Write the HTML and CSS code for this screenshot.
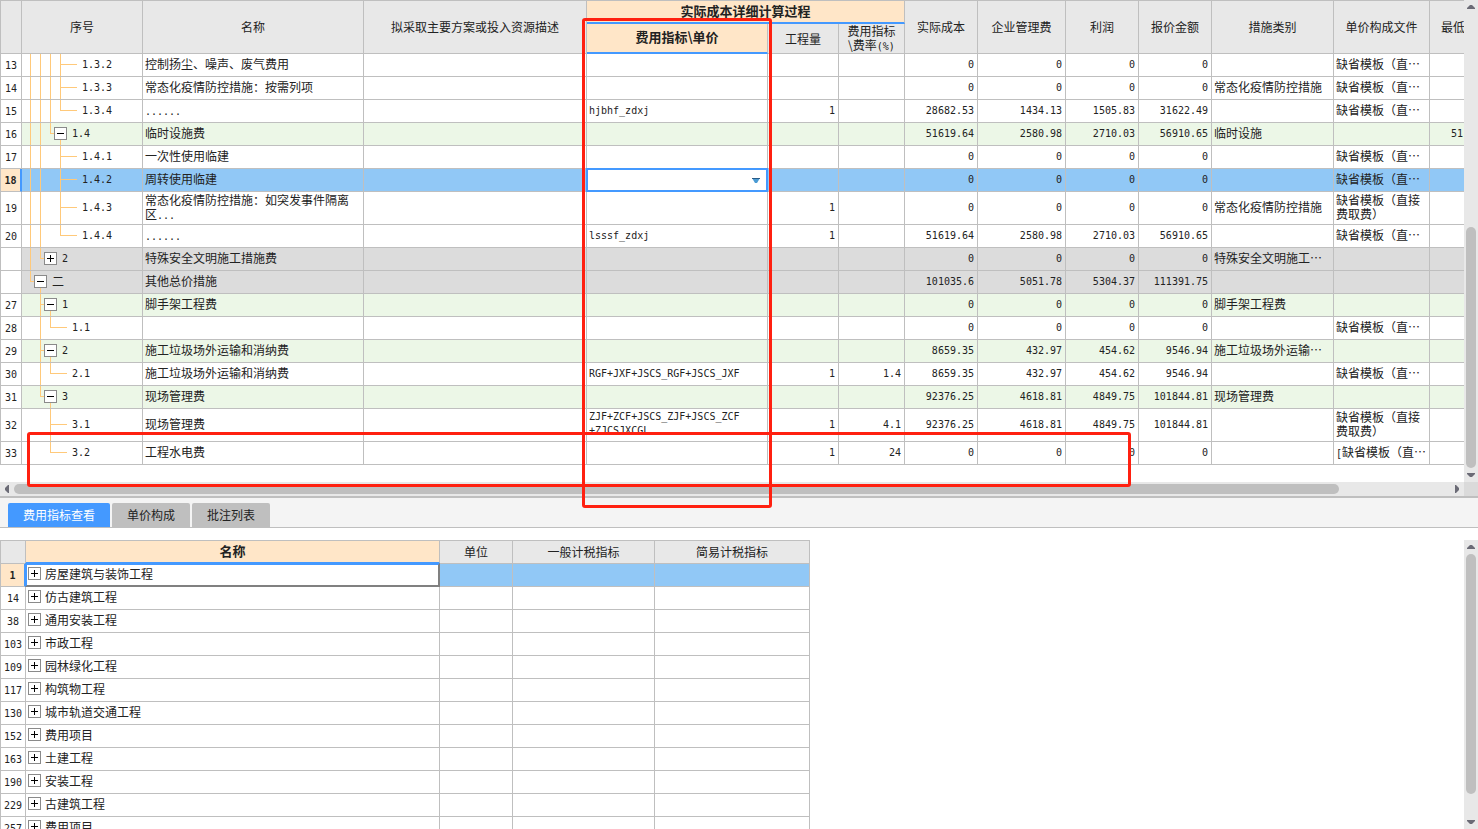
FILE: index.html
```html
<!DOCTYPE html>
<html lang="zh-CN">
<head>
<meta charset="utf-8">
<title>措施项目费用</title>
<link rel="stylesheet" href="styles.css">
</head>
<body>
<svg class="defs" aria-hidden="true">
  <symbol id="plus" viewBox="0 0 11 11"><path d="M2 5h7v1H2zM5 2h1v7H5z"/></symbol>
  <symbol id="minus" viewBox="0 0 11 11"><path d="M2 5h7v1H2z"/></symbol>
  <symbol id="up" viewBox="0 0 14 14"><path d="M3 9V8L6 5h2l3 3v1z"/></symbol>
  <symbol id="down" viewBox="0 0 14 14"><path d="M3 5v1l3 3h2l3-3V5z"/></symbol>
  <symbol id="left" viewBox="0 0 14 14"><path d="M9 3H8L5 6v2l3 3h1z"/></symbol>
  <symbol id="right" viewBox="0 0 14 14"><path d="M5 3h1l3 3v2l-3 3H5z"/></symbol>
</svg>

<main class="app">
<section class="upper">
  <div class="sheet">
  <table class="grid costs">
    <colgroup><col class="c-no"><col class="c-tree"><col class="c-name"><col class="c-plan"><col class="c-price"><col class="c-qty"><col class="c-rate"><col class="c-sum"><col class="c-mgmt"><col class="c-sum"><col class="c-sum"><col class="c-kind"><col class="c-file"><col></colgroup>
    <thead>
      <tr class="group">
        <th rowspan="2"></th><th rowspan="2">序号</th><th rowspan="2">名称</th><th rowspan="2">拟采取主要方案或投入资源描述</th>
        <th colspan="3" class="hot">实际成本详细计算过程</th>
        <th rowspan="2">实际成本</th><th rowspan="2">企业管理费</th><th rowspan="2">利润</th><th rowspan="2">报价金额</th><th rowspan="2">措施类别</th><th rowspan="2">单价构成文件</th><th rowspan="2" class="cut">最低</th>
      </tr>
      <tr class="sub">
        <th class="hot">费用指标\单价</th><th>工程量</th><th>费用指标<br>\费率<span class="m">(%)</span></th>
      </tr>
    </thead>
    <tbody>
      <tr><td class="no">13<td><div class="tree"><i class="v"></i><i class="v"></i><i class="v"></i><i class="t"></i><span>1.3.2</span></div><td>控制扬尘、噪声、废气费用<td><td><td><td><td class="n">0<td class="n">0<td class="n">0<td class="n">0<td><td>缺省模板（直…<td></tr>
      <tr><td class="no">14<td><div class="tree"><i class="v"></i><i class="v"></i><i class="v"></i><i class="t"></i><span>1.3.3</span></div><td>常态化疫情防控措施：按需列项<td><td><td><td><td class="n">0<td class="n">0<td class="n">0<td class="n">0<td>常态化疫情防控措施<td>缺省模板（直…<td></tr>
      <tr><td class="no">15<td><div class="tree"><i class="v"></i><i class="v"></i><i class="v"></i><i class="e"></i><span>1.3.4</span></div><td><span class="m">......</span><td><td class="f">hjbhf_zdxj<td class="n">1<td><td class="n">28682.53<td class="n">1434.13<td class="n">1505.83<td class="n">31622.49<td><td>缺省模板（直…<td></tr>
      <tr class="green"><td class="no">16<td><div class="tree"><i class="v"></i><i class="v"></i><i class="e s"></i><b><button aria-label="收起 1.4"><svg><use href="#minus"/></svg></button></b><span>1.4</span></div><td>临时设施费<td><td><td><td><td class="n">51619.64<td class="n">2580.98<td class="n">2710.03<td class="n">56910.65<td>临时设施<td><td class="n">51</tr>
      <tr><td class="no">17<td><div class="tree"><i class="v"></i><i class="v"></i><i></i><i class="t"></i><span>1.4.1</span></div><td>一次性使用临建<td><td><td><td><td class="n">0<td class="n">0<td class="n">0<td class="n">0<td><td>缺省模板（直…<td></tr>
      <tr class="sel"><td class="no">18<td><div class="tree"><i class="v"></i><i class="v"></i><i></i><i class="t"></i><span>1.4.2</span></div><td>周转使用临建<td><td class="editing"><div class="combo"><select aria-label="费用指标\单价"><option></option></select><svg viewBox="0 0 8 5"><path fill="#4a9bd4" d="M0 0h8L5 5H3z"/><path fill="#2a5d88" d="M0 0h8v1H0z"/></svg></div><td><td><td class="n">0<td class="n">0<td class="n">0<td class="n">0<td><td>缺省模板（直…<td></tr>
      <tr class="tall"><td class="no">19<td><div class="tree"><i class="v"></i><i class="v"></i><i></i><i class="t"></i><span>1.4.3</span></div><td>常态化疫情防控措施：如突发事件隔离<br>区<span class="m">...</span><td><td><td class="n">1<td><td class="n">0<td class="n">0<td class="n">0<td class="n">0<td>常态化疫情防控措施<td>缺省模板（直接<br>费取费）<td></tr>
      <tr><td class="no">20<td><div class="tree"><i class="v"></i><i class="v"></i><i></i><i class="e"></i><span>1.4.4</span></div><td><span class="m">......</span><td><td class="f">lsssf_zdxj<td class="n">1<td><td class="n">51619.64<td class="n">2580.98<td class="n">2710.03<td class="n">56910.65<td><td>缺省模板（直…<td></tr>
      <tr class="gray"><td class="no"><td><div class="tree"><i class="v"></i><i class="e s"></i><b class="shut"><button aria-label="展开 2"><svg><use href="#plus"/></svg></button></b><span>2</span></div><td>特殊安全文明施工措施费<td><td><td><td><td class="n">0<td class="n">0<td class="n">0<td class="n">0<td>特殊安全文明施工…<td><td></tr>
      <tr class="gray"><td class="no"><td><div class="tree"><i class="e s"></i><b><button aria-label="收起 二"><svg><use href="#minus"/></svg></button></b><span class="zh">二</span></div><td>其他总价措施<td><td><td><td><td class="n">101035.6<td class="n">5051.78<td class="n">5304.37<td class="n">111391.75<td><td><td></tr>
      <tr class="green"><td class="no">27<td><div class="tree"><i></i><i class="t s"></i><b><button aria-label="收起 1"><svg><use href="#minus"/></svg></button></b><span>1</span></div><td>脚手架工程费<td><td><td><td><td class="n">0<td class="n">0<td class="n">0<td class="n">0<td>脚手架工程费<td><td></tr>
      <tr><td class="no">28<td><div class="tree"><i></i><i class="v"></i><i class="e"></i><span>1.1</span></div><td><td><td><td><td><td class="n">0<td class="n">0<td class="n">0<td class="n">0<td><td>缺省模板（直…<td></tr>
      <tr class="green"><td class="no">29<td><div class="tree"><i></i><i class="t s"></i><b><button aria-label="收起 2"><svg><use href="#minus"/></svg></button></b><span>2</span></div><td>施工垃圾场外运输和消纳费<td><td><td><td><td class="n">8659.35<td class="n">432.97<td class="n">454.62<td class="n">9546.94<td>施工垃圾场外运输…<td><td></tr>
      <tr><td class="no">30<td><div class="tree"><i></i><i class="v"></i><i class="e"></i><span>2.1</span></div><td>施工垃圾场外运输和消纳费<td><td class="f">RGF+JXF+JSCS_RGF+JSCS_JXF<td class="n">1<td class="n">1.4<td class="n">8659.35<td class="n">432.97<td class="n">454.62<td class="n">9546.94<td><td>缺省模板（直…<td></tr>
      <tr class="green"><td class="no">31<td><div class="tree"><i></i><i class="e s"></i><b><button aria-label="收起 3"><svg><use href="#minus"/></svg></button></b><span>3</span></div><td>现场管理费<td><td><td><td><td class="n">92376.25<td class="n">4618.81<td class="n">4849.75<td class="n">101844.81<td>现场管理费<td><td></tr>
      <tr class="tall"><td class="no">32<td><div class="tree"><i></i><i></i><i class="t"></i><span>3.1</span></div><td>现场管理费<td><td class="f long"><div>ZJF+ZCF+JSCS_ZJF+JSCS_ZCF<br>+ZJCSJXCGL</div><td class="n">1<td class="n">4.1<td class="n">92376.25<td class="n">4618.81<td class="n">4849.75<td class="n">101844.81<td><td>缺省模板（直接<br>费取费）<td></tr>
      <tr><td class="no">33<td><div class="tree"><i></i><i></i><i class="e"></i><span>3.2</span></div><td>工程水电费<td><td><td class="n">1<td class="n">24<td class="n">0<td class="n">0<td class="n">0<td class="n">0<td><td><span class="m">[</span>缺省模板（直…<td></tr>
    </tbody>
  </table>
  </div>
  <div class="bar vertical"><svg><use href="#up"/></svg><span class="space-v"></span><span class="thumb"></span><svg><use href="#down"/></svg></div>
  <div class="bar"><svg><use href="#left"/></svg><span class="thumb thumb-h"></span><span class="space-h"></span><svg><use href="#right"/></svg></div>
  <div class="corner"></div>
  <div class="mark mark-column"></div>
  <div class="mark mark-row"></div>
</section>

<nav class="tabs">
  <button class="on">费用指标查看</button><button>单价构成</button><button>批注列表</button>
</nav>

<section class="lower">
  <div class="index">
  <table class="grid catalog">
    <colgroup><col class="k-no"><col class="k-name"><col class="k-unit"><col class="k-general"><col class="k-simple"></colgroup>
    <thead><tr><th></th><th class="hot">名称</th><th>单位</th><th>一般计税指标</th><th>简易计税指标</th></tr></thead>
    <tbody>
      <tr class="sel"><td class="no">1<td class="editing"><div class="focus"><button aria-label="展开"><svg><use href="#plus"/></svg></button>房屋建筑与装饰工程</div><td><td><td></tr>
      <tr><td class="no">14<td><div class="item"><button aria-label="展开"><svg><use href="#plus"/></svg></button>仿古建筑工程</div><td><td><td></tr>
      <tr><td class="no">38<td><div class="item"><button aria-label="展开"><svg><use href="#plus"/></svg></button>通用安装工程</div><td><td><td></tr>
      <tr><td class="no">103<td><div class="item"><button aria-label="展开"><svg><use href="#plus"/></svg></button>市政工程</div><td><td><td></tr>
      <tr><td class="no">109<td><div class="item"><button aria-label="展开"><svg><use href="#plus"/></svg></button>园林绿化工程</div><td><td><td></tr>
      <tr><td class="no">117<td><div class="item"><button aria-label="展开"><svg><use href="#plus"/></svg></button>构筑物工程</div><td><td><td></tr>
      <tr><td class="no">130<td><div class="item"><button aria-label="展开"><svg><use href="#plus"/></svg></button>城市轨道交通工程</div><td><td><td></tr>
      <tr><td class="no">152<td><div class="item"><button aria-label="展开"><svg><use href="#plus"/></svg></button>费用项目</div><td><td><td></tr>
      <tr><td class="no">163<td><div class="item"><button aria-label="展开"><svg><use href="#plus"/></svg></button>土建工程</div><td><td><td></tr>
      <tr><td class="no">190<td><div class="item"><button aria-label="展开"><svg><use href="#plus"/></svg></button>安装工程</div><td><td><td></tr>
      <tr><td class="no">229<td><div class="item"><button aria-label="展开"><svg><use href="#plus"/></svg></button>古建筑工程</div><td><td><td></tr>
      <tr><td class="no">257<td><div class="item"><button aria-label="展开"><svg><use href="#plus"/></svg></button>费用项目</div><td><td><td></tr>
    </tbody>
  </table>
  </div>
  <div class="bar vertical"><svg><use href="#up"/></svg><span class="thumb"></span><span class="space-low"></span><svg><use href="#down"/></svg></div>
</section>
</main>
</body>
</html>
```

FILE: styles.css
```css
:root {
  --line: #bfbfbf;
  --head: #e8e8e8;
  --blue: #4499ff;
  --peach: #ffe6c8;
  --guide: #ffc97a;
  --mono: "DejaVu Sans Mono", "Noto Sans CJK SC", monospace;
}

* { box-sizing: border-box; }

body {
  margin: 0;
  background: #fff;
  color: #222;
  font: 12px/14px "Noto Sans CJK SC", sans-serif;
}

button, select { font: inherit; color: inherit; }

.defs { position: absolute; width: 0; height: 0; }

.app {
  display: flex;
  flex-direction: column;
  height: 100vh;
  overflow: hidden;
}

/* panes */
.upper {
  position: relative;
  display: grid;
  grid-template-columns: minmax(0, 1fr) 14px;
  flex: none;
  border-bottom: 2px solid var(--line);
}

.sheet {
  overflow: hidden;
  padding-bottom: 17px;
}

.lower {
  display: grid;
  grid-template-columns: minmax(0, 1fr) 14px;
  flex: 1;
  min-height: 0;
  margin-top: 12px;
}

.index { overflow: hidden; }

/* tables */
.grid {
  table-layout: fixed;
  border-collapse: separate;
  border-spacing: 0;
  border-top: 1px solid var(--line);
  border-left: 1px solid var(--line);
}

.costs { width: 100%; }
.catalog { width: 810px; }

.c-no { width: 21px; }
.c-tree { width: 121px; }
.c-name { width: 221px; }
.c-plan { width: 223px; }
.c-price { width: 181px; }
.c-qty { width: 71px; }
.c-rate { width: 66px; }
.c-sum { width: 73px; }
.c-mgmt { width: 88px; }
.c-kind { width: 122px; }
.c-file { width: 96px; }
.k-no { width: 25px; }
.k-name { width: 414px; }
.k-unit { width: 73px; }
.k-general { width: 142px; }
.k-simple { width: 155px; }

.grid th, .grid td {
  padding: 0 2px;
  border-right: 1px solid var(--line);
  border-bottom: 1px solid var(--line);
  white-space: nowrap;
}

.grid td { padding-bottom: 2px; }

.grid th {
  background: var(--head);
  font-weight: 400;
  text-align: center;
}

.grid th.hot {
  padding-bottom: 2px;
  background: var(--peach);
  border-bottom: 2px solid var(--blue);
  font-size: 13px;
  font-weight: 700;
}

.grid th.cut, .grid td:nth-child(14) { border-right: 0; }
.grid th.cut { padding-left: 11px; text-align: left; }

.group { height: 23px; }
.sub { height: 30px; }
.catalog thead tr { height: 23px; }
tbody tr { height: 23px; }
tbody .tall { height: 33px; }

.grid .no {
  padding: 2px 0 0;
  background: #fff;
  font: 10px/14px var(--mono);
  text-align: center;
}

.grid .n {
  padding: 0 3px 0 0;
  font: 10px/14px var(--mono);
  text-align: right;
}

.grid td.n:last-child { padding-left: 21px; text-align: left; }

.grid .f { padding-bottom: 0; font: 10px/14px var(--mono); }
.grid .long { padding-top: 1px; vertical-align: top; }
.long div { height: 25px; overflow: hidden; }
.m { font: 10px/12px var(--mono); }

.green { background: #ecf7e7; }
.gray { background: #dcdcdc; }
.sel { background: #91c8f6; }

.sel .no {
  background: var(--peach);
  border-right: 2px solid var(--blue);
  font-weight: 700;
}

/* outline tree */
.grid td:has(.tree) { padding-bottom: 0; }

.tree {
  --mid: 10px;
  display: flex;
  height: 22px;
  padding-left: 6px;
  font: 10px/14px var(--mono);
}

.tall .tree { --mid: 15px; height: 32px; }
.tree span { align-self: center; margin-left: 5px; }
.tree .zh { margin-bottom: 2px; font: 12px/14px "Noto Sans CJK SC", sans-serif; }
.tree i { flex: none; width: 10px; background-repeat: no-repeat; }

.tree .v {
  background-image: linear-gradient(var(--guide), var(--guide));
  background-size: 1px 100%;
}

.tree .t, .tree .e {
  width: 17px;
  background-image: linear-gradient(var(--guide), var(--guide)), linear-gradient(var(--guide), var(--guide));
  background-position: 0 0, 0 var(--mid);
  background-size: 1px 100%, 100% 1px;
}

.tree .e { background-size: 1px var(--mid), 100% 1px; }
.tree .t.s, .tree .e.s { width: 4px; }

.tree b {
  display: flex;
  align-items: center;
  background: linear-gradient(var(--guide), var(--guide)) 6px 100% / 1px 50% no-repeat;
}

.tree button { margin-bottom: 1px; }
.tree .shut { background: none; }

.tree button, .item button, .focus button {
  flex: none;
  width: 13px;
  height: 13px;
  padding: 0;
  border: 1px solid #8a8a8a;
  background: #fff;
}

button svg { display: block; width: 11px; height: 11px; }

/* cells being edited */
.editing { position: relative; }

.combo, .focus {
  position: absolute;
  inset: -1px;
  z-index: 1;
  display: flex;
  align-items: center;
  background: #fff;
}

.combo { border: 2px solid var(--blue); padding-right: 6px; }

.combo select {
  flex: 1;
  min-width: 0;
  height: 18px;
  border: 0;
  background: none;
  appearance: none;
  outline: 0;
}

.combo svg { width: 8px; height: 5px; }

.item, .focus { display: flex; align-items: center; gap: 4px; }
.item button, .focus button { margin-bottom: 1px; }

.focus {
  padding: 0 0 2px 1px;
  border: 2px solid #808080;
  border-top-color: var(--blue);
  border-left: 2px solid var(--blue);
}

/* scroll bars */
.bar {
  display: flex;
  height: 14px;
  background: var(--head);
}

.bar svg { flex: none; width: 14px; height: 14px; fill: #6b6b76; }
.vertical { flex-direction: column; height: auto; }

.thumb {
  flex: 240;
  margin: 0 2px;
  border-radius: 5px;
  background: #bfbfbf;
}

.thumb-h { flex: 1325; margin: 2px 0; }
.space-v { flex: 213; }
.space-h { flex: 111; }
.space-low { flex: 21; }
.corner { background: #dadada; }

/* highlight frames */
.mark {
  position: absolute;
  z-index: 2;
  border: 3px solid #ff2010;
  border-radius: 3px;
  pointer-events: none;
}

.mark-column { left: 582px; top: 18px; width: 190px; height: 490px; }
.mark-row { left: 27px; top: 432px; width: 1104px; height: 55px; }

/* tabs */
.tabs {
  display: flex;
  flex: none;
  gap: 2px;
  padding: 5px 0 0 8px;
  border-bottom: 1px solid var(--line);
  background: #f4f4f4;
}

.tabs button {
  height: 24px;
  padding: 0 15px;
  border: 0;
  border-radius: 2px 2px 0 0;
  background: #bfbfbf;
}

.tabs .on { background: var(--blue); color: #fff; }
```
